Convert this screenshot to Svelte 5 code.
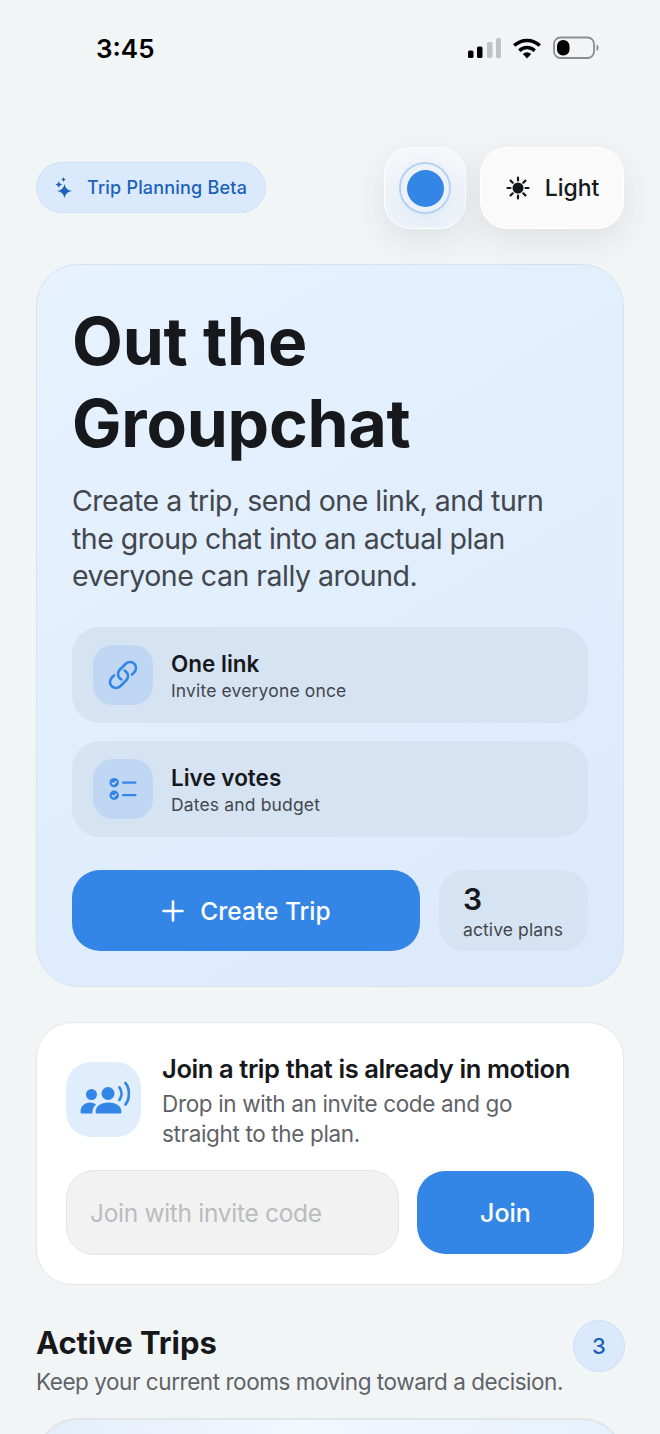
<script>
	const features = [
		{ title: 'One link', sub: 'Invite everyone once', icon: 'link' },
		{ title: 'Live votes', sub: 'Dates and budget', icon: 'votes' }
	];
</script>

<div class="page">
	<div class="status">
		<span class="time">3:45</span>
		<div class="status-icons">
			<svg width="34" height="22" viewBox="0 0 34 22">
				<rect x="1" y="13.500" width="5.500" height="7.500" rx="1.5" fill="#000" />
				<rect x="10" y="9.500" width="5.500" height="11.500" rx="1.5" fill="#000" />
				<rect x="20" y="5" width="5.500" height="16" rx="1.5" fill="#bfc3c5" />
				<rect x="29" y="1" width="5" height="20" rx="1.5" fill="#bfc3c5" />
			</svg>
			<svg width="30" height="22" viewBox="0 0 30 22">
				<path d="M15 21.500 10.800 17a6 6 0 0 1 8.400 0Z" fill="#000" />
				<path d="M7.300 13.700a11 11 0 0 1 15.400 0M2.200 8.600a18.500 18.500 0 0 1 25.600 0" fill="none" stroke="#000" stroke-width="3.400" />
			</svg>
			<svg class="battery" width="46" height="24" viewBox="0 0 46 24">
				<rect x="1" y="1.500" width="40" height="20.500" rx="6.500" fill="none" stroke="#8b8e90" stroke-width="1.800" />
				<rect x="4" y="4" width="12.500" height="15.500" rx="6" fill="#000" />
				<path d="M43.500 8.500c1.500.5 2 1.700 2 3.200s-.5 2.700-2 3.200Z" fill="#8b8e90" />
			</svg>
		</div>
	</div>

	<header class="top">
		<div class="beta">
			<svg width="20" height="24" viewBox="0 0 20 24" fill="#1c62b9">
				<path d="M9.500 8Q10.500 14 17 15 10.500 16 9.500 22 8.500 16 2 15 8.500 14 9.500 8Z" />
				<path d="M3.800 5Q4.300 8 7.300 8.500 4.300 9 3.800 12 3.300 9 .3 8.500 3.300 8 3.800 5Z" />
				<path d="M8.500 1Q8.800 3.200 11 3.500 8.800 3.800 8.500 6 8.200 3.800 6 3.500 8.200 3.200 8.500 1Z" />
			</svg>
			<span>Trip Planning Beta</span>
		</div>
		<div class="controls">
			<div class="tile accent"><span class="ring"><span class="dot"></span></span></div>
			<div class="tile mode">
				<svg width="26" height="26" viewBox="0 0 26 26">
					<circle cx="13" cy="13" r="5.500" fill="#14161a" />
					<path d="M13 2.500v3M13 20.500v3M2.500 13h3M20.500 13h3M5.600 5.600l2.100 2.100M18.300 18.300l2.100 2.100M5.600 20.400l2.100-2.100M18.300 7.700l2.100-2.100" stroke="#14161a" stroke-width="2.200" stroke-linecap="round" />
				</svg>
				<span>Light</span>
			</div>
		</div>
	</header>

	<section class="hero">
		<h1>Out the<br />Groupchat</h1>
		<p class="lead">Create a trip, send one link, and turn the group chat into an actual plan everyone can rally around.</p>
		<div class="features">
			{#each features as f}
				<div class="feature">
					<div class="feature-icon">
						{#if f.icon === 'link'}
							<svg width="32" height="32" viewBox="0 0 24 24" fill="none" stroke="#3486e6" stroke-width="1.900" stroke-linecap="round" stroke-linejoin="round">
								<path d="M13.190 8.688a4.500 4.500 0 0 1 1.242 7.244l-4.500 4.500a4.500 4.500 0 0 1-6.364-6.364l1.757-1.757m13.350-.622 1.757-1.757a4.500 4.500 0 0 0-6.364-6.364l-4.500 4.500a4.500 4.500 0 0 0 1.242 7.244" />
							</svg>
						{:else}
							<svg width="28" height="28" viewBox="0 0 28 28">
								<circle cx="5.200" cy="7.600" r="4.700" fill="#3486e6" />
								<circle cx="5.200" cy="20.200" r="4.700" fill="#3486e6" />
								<path d="M3 7.600l1.600 1.700 2.900-3M3 20.200l1.600 1.700 2.900-3" fill="none" stroke="#d5e4f5" stroke-width="1.300" />
								<path d="M14 7.600h12.500M14 20.200h12.500" stroke="#3486e6" stroke-width="2.200" stroke-linecap="round" />
							</svg>
						{/if}
					</div>
					<div class="feature-text">
						<div class="feature-title">{f.title}</div>
						<div class="feature-sub">{f.sub}</div>
					</div>
				</div>
			{/each}
		</div>
		<div class="actions">
			<button class="create">
				<svg width="24" height="24" viewBox="0 0 24 24">
					<path d="M12 2.500v19M2.500 12h19" stroke="#fff" stroke-width="2.600" stroke-linecap="round" />
				</svg>
				Create Trip
			</button>
			<div class="stat">
				<strong>3</strong>
				<span>active plans</span>
			</div>
		</div>
	</section>

	<section class="join">
		<div class="join-head">
			<div class="join-icon">
				<svg width="52" height="44" viewBox="0 0 52 44" fill="#3486e6">
					<circle cx="13.500" cy="17.500" r="5.500" />
					<path d="M2.500 35c0-5.500 4-9.500 9.500-9.500 2.500 0 4.500.8 6 2-2.500 2.200-3.700 5-3.700 9H4c-1 0-1.500-.6-1.500-1.500Z" />
					<circle cx="30" cy="16.500" r="6.500" />
					<path d="M19 36.500c-1 0-1.500-.6-1.500-1.500 0-5.500 5-9.500 13-9.500s13 4 13 9.500c0 .9-.5 1.500-1.500 1.500Z" />
					<path d="M41.500 10.500c2.600 3.800 2.600 9 0 12.500M47.500 6c4.600 6 4.600 15.500 0 21.500" fill="none" stroke="#3486e6" stroke-width="2.800" stroke-linecap="round" />
				</svg>
			</div>
			<div>
				<h2>Join a trip that is already in motion</h2>
				<p>Drop in with an invite code and go straight to the plan.</p>
			</div>
		</div>
		<div class="join-form">
			<input placeholder="Join with invite code" />
			<button>Join</button>
		</div>
	</section>

	<section class="trips">
		<div class="trips-head">
			<div>
				<h3>Active Trips</h3>
				<p>Keep your current rooms moving toward a decision.</p>
			</div>
			<div class="count">3</div>
		</div>
		<div class="trip-card"></div>
	</section>
</div>

<style>
	:global(body) {
		margin: 0;
		background: #f2f5f6;
	}
	.page {
		height: 1434px;
		overflow: hidden;
		box-sizing: border-box;
		padding: 0 36px;
		background: #f2f5f6;
		font-family: Inter, 'Liberation Sans', sans-serif;
		color: #16181c;
	}
	.status {
		height: 147px;
		display: flex;
		justify-content: space-between;
		align-items: flex-start;
		padding: 33px 25px 0 60px;
		box-sizing: border-box;
	}
	.time {
		font-size: 26px;
		line-height: 31px;
		font-weight: 600;
		color: #000;
	}
	.status-icons {
		display: flex;
		align-items: center;
		gap: 11px;
		padding-top: 3px;
	}
	.top {
		display: flex;
		justify-content: space-between;
		align-items: center;
	}
	.beta {
		display: flex;
		align-items: center;
		gap: 12px;
		height: 51px;
		margin-bottom: 1px;
		box-sizing: border-box;
		padding: 0 18px 0 18px;
		border-radius: 26px;
		background: #dae9fb;
		border: 1.500px solid #cde0f7;
		color: #1c62b9;
		font-size: 18px;
		font-weight: 500;
		letter-spacing: 0.2px;
	}
	.controls {
		display: flex;
		gap: 14px;
	}
	.tile {
		height: 82px;
		box-sizing: border-box;
		border-radius: 27px;
		border: 1.500px solid #fff;
		background: #fafafa;
		box-shadow: 0 12px 34px rgba(40, 60, 80, 0.1);
		display: flex;
		align-items: center;
		justify-content: center;
	}
	.accent {
		width: 82px;
		background: radial-gradient(circle at 50% 65%, #dce8f6 0, #f5f7fa 75%);
	}
	.ring {
		width: 52px;
		height: 52px;
		box-sizing: border-box;
		border-radius: 50%;
		border: 2px solid #b5d2f5;
		background: #edf2f9;
		display: flex;
		align-items: center;
		justify-content: center;
	}
	.dot {
		width: 37px;
		height: 37px;
		border-radius: 50%;
		background: #3486e6;
	}
	.mode {
		width: 144px;
		gap: 14px;
		font-size: 23px;
		font-weight: 500;
	}
	.hero {
		margin-top: 35px;
		height: 723px;
		box-sizing: border-box;
		padding: 35px 35px;
		border-radius: 42px;
		border: 1.500px solid #d7e2ee;
		background: linear-gradient(150deg, #e7f2fe 0%, #dfedfd 60%, #dbe9fb 100%);
	}
	h1 {
		margin: 0;
		font-size: 66px;
		line-height: 82px;
		font-weight: 700;
		letter-spacing: -0.2px;
	}
	.lead {
		margin: 18px 0 0;
		font-size: 28.500px;
		line-height: 37.500px;
		letter-spacing: -0.5px;
		color: #43474d;
	}
	.features {
		margin-top: 32px;
		display: flex;
		flex-direction: column;
		gap: 18px;
	}
	.feature {
		height: 96px;
		box-sizing: border-box;
		padding: 0 21px;
		border-radius: 28px;
		background: #d6e3f2;
		display: flex;
		align-items: center;
		gap: 18px;
	}
	.feature-icon {
		width: 60px;
		height: 60px;
		border-radius: 20px;
		background: #bfd7f2;
		display: flex;
		align-items: center;
		justify-content: center;
	}
	.feature-text {
		padding-top: 3px;
	}
	.feature-title {
		font-size: 22.500px;
		line-height: 29px;
		font-weight: 600;
	}
	.feature-sub {
		font-size: 17.500px;
		line-height: 25px;
		letter-spacing: 0.15px;
		color: #43474d;
	}
	.actions {
		margin-top: 33px;
		display: flex;
		gap: 19px;
	}
	.create {
		flex: 0 0 348px;
		height: 81px;
		padding: 2px 0 0;
		border: none;
		border-radius: 28px;
		background: #3486e6;
		color: #fff;
		font: 500 24.500px Inter, sans-serif;
		display: flex;
		align-items: center;
		justify-content: center;
		gap: 15px;
	}
	.stat {
		flex: 1;
		height: 81px;
		box-sizing: border-box;
		padding: 12px 24px;
		border-radius: 26px;
		background: #d6e3f2;
		display: flex;
		flex-direction: column;
	}
	.stat strong {
		font-size: 30px;
		line-height: 34px;
		font-weight: 600;
	}
	.stat span {
		margin-top: 2px;
		font-size: 17.500px;
		line-height: 24px;
		letter-spacing: 0.1px;
		color: #43474d;
	}
	.join {
		margin-top: 35px;
		height: 263px;
		box-sizing: border-box;
		padding: 29px 29px;
		border-radius: 36px;
		border: 1.500px solid #e4e7ea;
		background: #fff;
	}
	.join-head {
		display: flex;
		align-items: center;
		gap: 21px;
	}
	.join-icon {
		flex: none;
		width: 75px;
		height: 75px;
		margin-bottom: 2px;
		border-radius: 25px;
		background: #e0edfc;
		display: flex;
		align-items: center;
		justify-content: center;
	}
	h2 {
		margin: 0;
		font-size: 25.500px;
		line-height: 33px;
		font-weight: 600;
		letter-spacing: -0.4px;
	}
	.join p {
		margin: 4px 0 0;
		font-size: 22.500px;
		line-height: 29.500px;
		letter-spacing: -0.35px;
		color: #5f6368;
	}
	.join-form {
		margin-top: 22px;
		display: flex;
		align-items: center;
		gap: 18px;
	}
	.join-form input {
		flex: 0 0 333px;
		height: 85px;
		box-sizing: border-box;
		padding: 0 23px;
		border-radius: 28px;
		border: 1.500px solid #e4e5e6;
		background: #f2f2f3;
		font: 400 24.500px Inter, sans-serif;
		letter-spacing: -0.3px;
		min-width: 0;
	}
	.join-form input::placeholder {
		color: #bbbcbe;
	}
	.join-form button {
		flex: 1;
		height: 83px;
		border: none;
		border-radius: 28px;
		background: #3486e6;
		color: #fff;
		font: 500 25px Inter, sans-serif;
	}
	.trips {
		margin-top: 35px;
	}
	.trips-head {
		display: flex;
		justify-content: space-between;
		align-items: flex-start;
	}
	h3 {
		margin: 4px 0 0;
		font-size: 31px;
		line-height: 38px;
		font-weight: 700;
		letter-spacing: -0.05px;
	}
	.trips p {
		margin: 5px 0 0;
		font-size: 22.500px;
		line-height: 30px;
		letter-spacing: -0.45px;
		color: #5f6368;
	}
	.count {
		flex: none;
		width: 52px;
		height: 52px;
		margin-right: -1px;
		box-sizing: border-box;
		border-radius: 50%;
		background: #dae9fb;
		border: 1.500px solid #cde0f7;
		color: #1c62b9;
		font-size: 22px;
		font-weight: 500;
		display: flex;
		align-items: center;
		justify-content: center;
	}
	.trip-card {
		margin-top: 21px;
		height: 200px;
		box-sizing: border-box;
		border-radius: 42px;
		border: 2px solid #e0e5ea;
		background: linear-gradient(90deg, #e3edfb 0%, #f3f7fe 45%, #e6f0fc 100%);
	}
</style>
